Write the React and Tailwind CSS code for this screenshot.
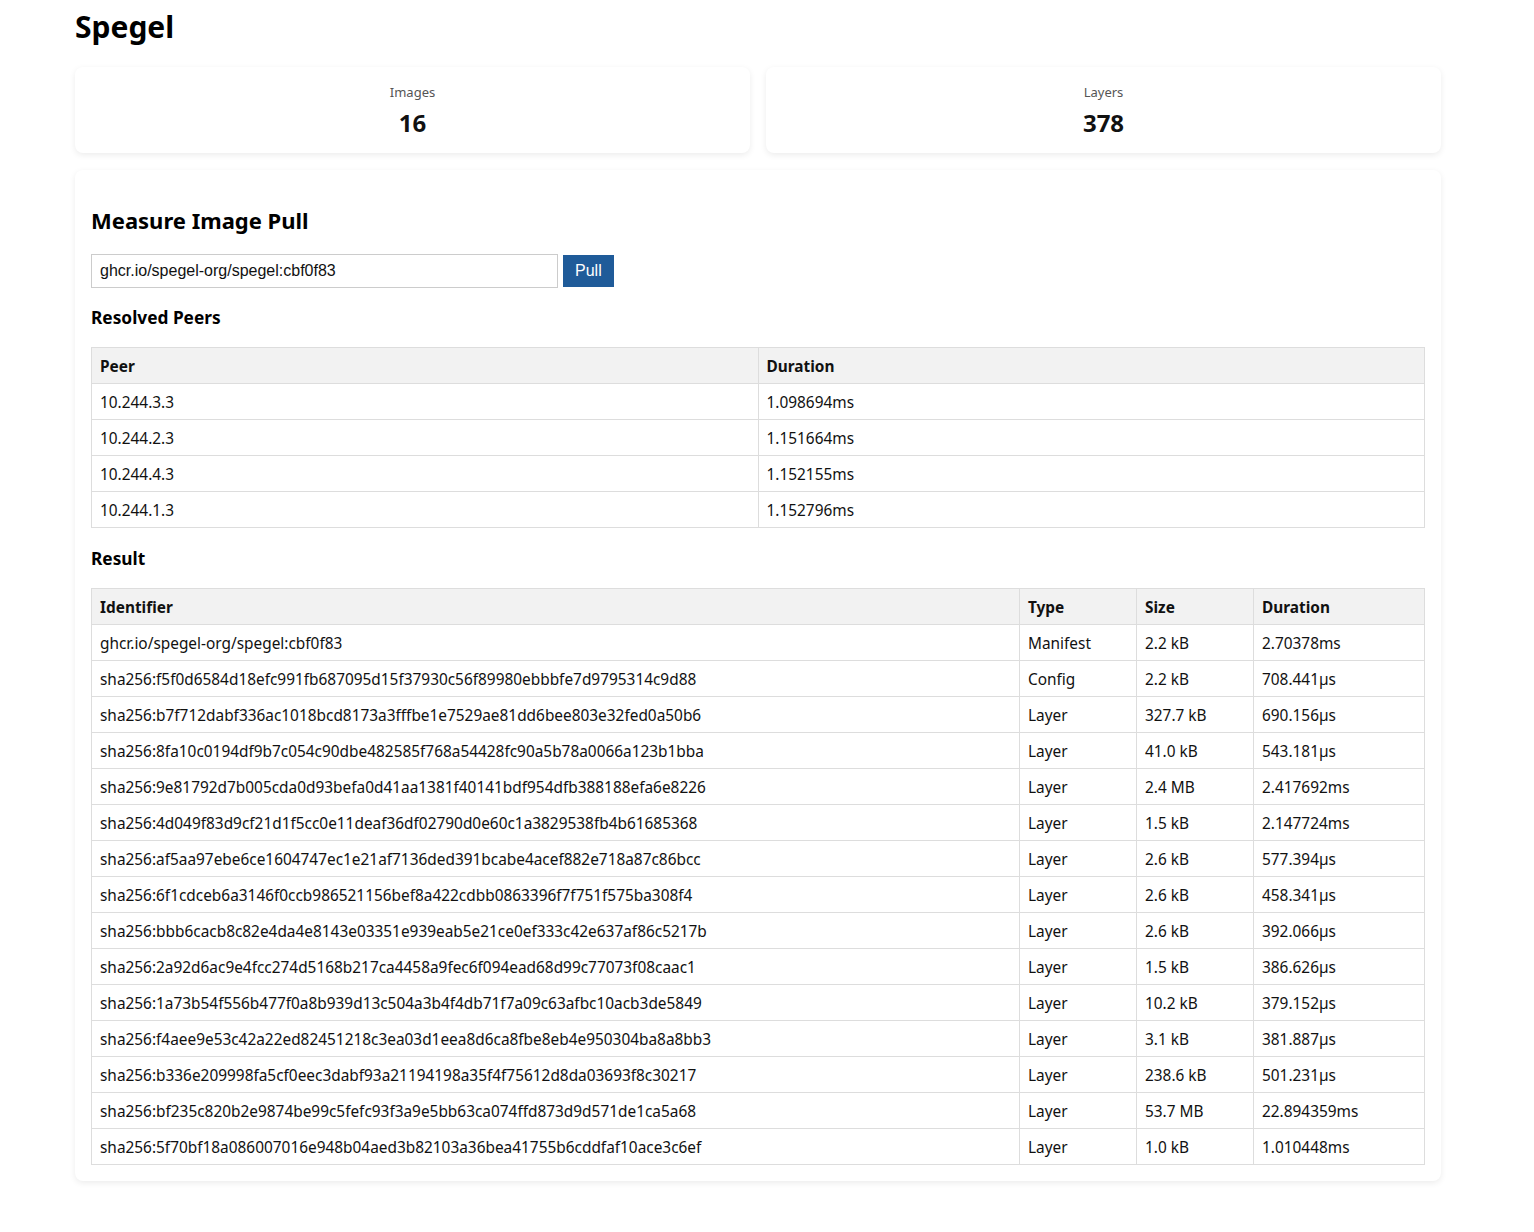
import React from 'react';

const peers = [
  ['10.244.3.3', '1.098694ms'],
  ['10.244.2.3', '1.151664ms'],
  ['10.244.4.3', '1.152155ms'],
  ['10.244.1.3', '1.152796ms'],
];

const results = [
  ['ghcr.io/spegel-org/spegel:cbf0f83', 'Manifest', '2.2 kB', '2.70378ms'],
  ['sha256:f5f0d6584d18efc991fb687095d15f37930c56f89980ebbbfe7d9795314c9d88', 'Config', '2.2 kB', '708.441µs'],
  ['sha256:b7f712dabf336ac1018bcd8173a3fffbe1e7529ae81dd6bee803e32fed0a50b6', 'Layer', '327.7 kB', '690.156µs'],
  ['sha256:8fa10c0194df9b7c054c90dbe482585f768a54428fc90a5b78a0066a123b1bba', 'Layer', '41.0 kB', '543.181µs'],
  ['sha256:9e81792d7b005cda0d93befa0d41aa1381f40141bdf954dfb388188efa6e8226', 'Layer', '2.4 MB', '2.417692ms'],
  ['sha256:4d049f83d9cf21d1f5cc0e11deaf36df02790d0e60c1a3829538fb4b61685368', 'Layer', '1.5 kB', '2.147724ms'],
  ['sha256:af5aa97ebe6ce1604747ec1e21af7136ded391bcabe4acef882e718a87c86bcc', 'Layer', '2.6 kB', '577.394µs'],
  ['sha256:6f1cdceb6a3146f0ccb986521156bef8a422cdbb0863396f7f751f575ba308f4', 'Layer', '2.6 kB', '458.341µs'],
  ['sha256:bbb6cacb8c82e4da4e8143e03351e939eab5e21ce0ef333c42e637af86c5217b', 'Layer', '2.6 kB', '392.066µs'],
  ['sha256:2a92d6ac9e4fcc274d5168b217ca4458a9fec6f094ead68d99c77073f08caac1', 'Layer', '1.5 kB', '386.626µs'],
  ['sha256:1a73b54f556b477f0a8b939d13c504a3b4f4db71f7a09c63afbc10acb3de5849', 'Layer', '10.2 kB', '379.152µs'],
  ['sha256:f4aee9e53c42a22ed82451218c3ea03d1eea8d6ca8fbe8eb4e950304ba8a8bb3', 'Layer', '3.1 kB', '381.887µs'],
  ['sha256:b336e209998fa5cf0eec3dabf93a21194198a35f4f75612d8da03693f8c30217', 'Layer', '238.6 kB', '501.231µs'],
  ['sha256:bf235c820b2e9874be99c5fefc93f3a9e5bb63ca074ffd873d9d571de1ca5a68', 'Layer', '53.7 MB', '22.894359ms'],
  ['sha256:5f70bf18a086007016e948b04aed3b82103a36bea41755b6cddfaf10ace3c6ef', 'Layer', '1.0 kB', '1.010448ms'],
];

const th = 'border border-[#dddddd] px-2 pt-[9px] pb-[7px] text-left font-bold leading-[19px]';
const td = 'border border-[#dddddd] px-2 pt-[9px] pb-[7px] leading-[19px]';

const StatCard = ({ label, value }) => (
  <div className="flex-1 bg-white rounded-lg shadow-[0_2px_6px_rgba(0,0,0,0.08)] h-[86px] flex flex-col items-center pt-[17px]">
    <div className="text-[13px] text-[#555] leading-4">{label}</div>
    <div className="text-[24px] font-bold leading-8 mt-[7px]">{value}</div>
  </div>
);

export default function App() {
  return (
    <div className="min-h-screen bg-white text-[#111] font-['Noto_Sans',sans-serif]">
      <div className="ml-[75px] w-[1366px] pb-12">
        <h1 className="text-[30px] font-bold leading-[54px] text-black">Spegel</h1>

        <div className="flex gap-4 mt-[13px]">
          <StatCard label="Images" value="16" />
          <StatCard label="Layers" value="378" />
        </div>

        <div className="bg-white rounded-lg shadow-[0_2px_6px_rgba(0,0,0,0.08)] mt-[17px] px-4 pt-[34px] pb-4">
          <h2 className="text-[22px] font-bold leading-8 text-black">Measure Image Pull</h2>

          <div className="flex items-center gap-[5px] mt-[18px]">
            <input
              defaultValue="ghcr.io/spegel-org/spegel:cbf0f83"
              className="w-[467px] h-[34px] border border-[#cccccc] px-2 text-[16px] font-['Liberation_Sans',sans-serif] text-[#111] outline-none"
            />
            <button className="bg-[#1f5b99] text-white h-[32px] px-3 text-[16px] font-['Liberation_Sans',sans-serif]">
              Pull
            </button>
          </div>

          <h3 className="text-[17.3px] font-bold leading-6 mt-[18px] text-black">Resolved Peers</h3>
          <table className="w-full border-collapse mt-[17px] text-[15.4px]">
            <thead>
              <tr className="bg-[#f2f2f2]">
                <th className={`${th} w-1/2`}>Peer</th>
                <th className={th}>Duration</th>
              </tr>
            </thead>
            <tbody>
              {peers.map(([peer, dur]) => (
                <tr key={peer}>
                  <td className={td}>{peer}</td>
                  <td className={td}>{dur}</td>
                </tr>
              ))}
            </tbody>
          </table>

          <h3 className="text-[17.3px] font-bold leading-6 mt-[19px] text-black">Result</h3>
          <table className="w-full border-collapse mt-[17px] text-[15.4px]">
            <thead>
              <tr className="bg-[#f2f2f2]">
                <th className={th}>Identifier</th>
                <th className={`${th} w-[117px]`}>Type</th>
                <th className={`${th} w-[117px]`}>Size</th>
                <th className={`${th} w-[171px]`}>Duration</th>
              </tr>
            </thead>
            <tbody>
              {results.map(([id, type, size, dur]) => (
                <tr key={id}>
                  <td className={td}>{id}</td>
                  <td className={td}>{type}</td>
                  <td className={td}>{size}</td>
                  <td className={td}>{dur}</td>
                </tr>
              ))}
            </tbody>
          </table>
        </div>
      </div>
    </div>
  );
}
